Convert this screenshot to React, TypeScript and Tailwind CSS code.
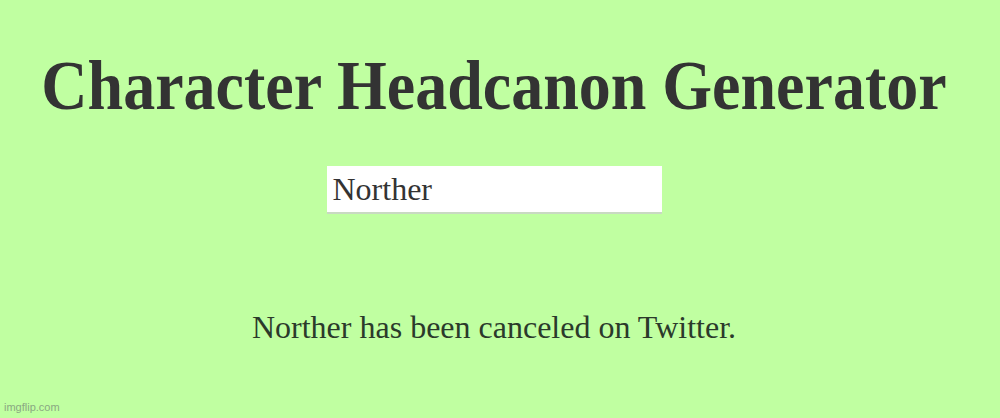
import React from "react";

export default function App() {
  return (
    <div className="relative w-[1000px] h-[418px] bg-[#c0ffa1] overflow-hidden">
      <div className="flex flex-col items-center pt-[48px] pr-[12px] font-['Liberation_Serif',serif] text-[#333333]">
        <h1 className="text-[64px] leading-[76px] font-bold scale-y-[1.1]">Character Headcanon Generator</h1>
        <div className="mt-[42px] w-[335px] h-[48px] bg-white border-b-2 border-[#c9d9c2] flex items-center pl-[6px]">
          <span className="text-[32px] leading-[38px] text-[#333333]">Norther</span>
        </div>
        <p className="mt-[94px] text-[32px] leading-[38px] text-[#2b3a2b]">Norther has been canceled on Twitter.</p>
      </div>
      <div className="absolute left-[4px] bottom-[3px] text-[11px] text-[#8aa882] font-['Liberation_Sans',sans-serif]">imgflip.com</div>
    </div>
  );
}
